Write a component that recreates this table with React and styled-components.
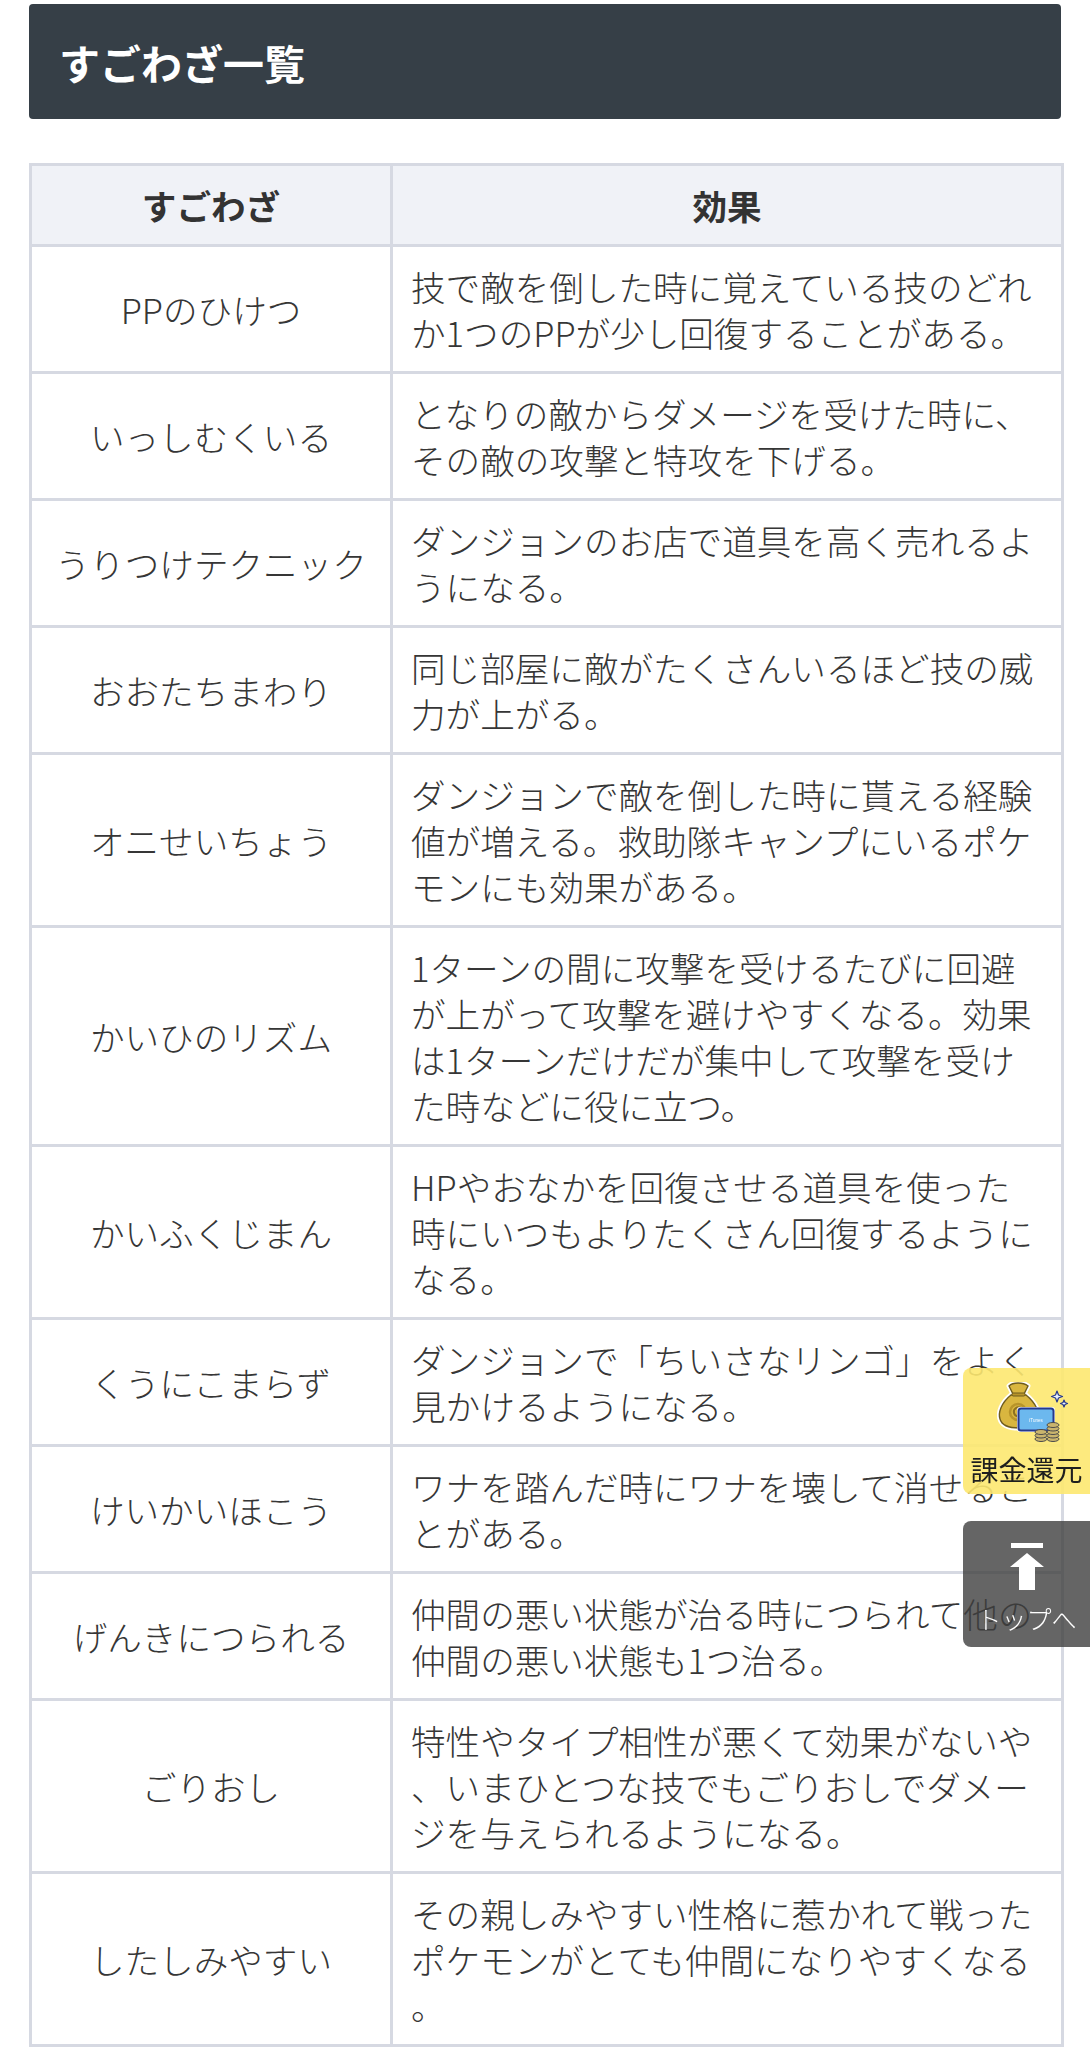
import React from 'react';
import styled, { createGlobalStyle } from 'styled-components';

const GlobalStyle = createGlobalStyle`
  html, body {
    margin: 0;
    padding: 0;
    background: #ffffff;
  }
  body {
    font-family: 'Noto Sans CJK JP', 'Noto Sans', sans-serif;
    color: #333333;
  }
`;

const skills = [
  {
    name: 'PPのひけつ',
    effect: '技で敵を倒した時に覚えている技のどれか1つのPPが少し回復することがある。',
  },
  {
    name: 'いっしむくいる',
    effect: 'となりの敵からダメージを受けた時に、その敵の攻撃と特攻を下げる。',
  },
  {
    name: 'うりつけテクニック',
    effect: 'ダンジョンのお店で道具を高く売れるようになる。',
  },
  {
    name: 'おおたちまわり',
    effect: '同じ部屋に敵がたくさんいるほど技の威力が上がる。',
  },
  {
    name: 'オニせいちょう',
    effect:
      'ダンジョンで敵を倒した時に貰える経験値が増える。救助隊キャンプにいるポケモンにも効果がある。',
  },
  {
    name: 'かいひのリズム',
    effect:
      '1ターンの間に攻撃を受けるたびに回避が上がって攻撃を避けやすくなる。効果は1ターンだけだが集中して攻撃を受けた時などに役に立つ。',
  },
  {
    name: 'かいふくじまん',
    effect: 'HPやおなかを回復させる道具を使った時にいつもよりたくさん回復するようになる。',
  },
  {
    name: 'くうにこまらず',
    effect: 'ダンジョンで「ちいさなリンゴ」をよく見かけるようになる。',
  },
  {
    name: 'けいかいほこう',
    effect: 'ワナを踏んだ時にワナを壊して消せることがある。',
  },
  {
    name: 'げんきにつられる',
    effect: '仲間の悪い状態が治る時につられて他の仲間の悪い状態も1つ治る。',
  },
  {
    name: 'ごりおし',
    effect:
      '特性やタイプ相性が悪くて効果がないや、いまひとつな技でもごりおしでダメージを与えられるようになる。',
  },
  {
    name: 'したしみやすい',
    effect: 'その親しみやすい性格に惹かれて戦ったポケモンがとても仲間になりやすくなる。',
  },
];

const Page = styled.main`
  padding: 4px 29px 0;
`;

const SectionHeader = styled.div`
  display: flex;
  align-items: center;
  height: 115px;
  padding: 0 30px;
  background: #363f47;
  border-radius: 4px;
  box-sizing: border-box;
`;

const SectionTitle = styled.h2`
  margin: 0;
  color: #ffffff;
  font-size: 41px;
  font-weight: 700;
  letter-spacing: 0;
`;

const Table = styled.table`
  width: 100%;
  margin-top: 44px;
  border-collapse: collapse;
  table-layout: fixed;
`;

const Col = styled.col`
  width: ${(p) => p.$w}px;
`;

const HeadCell = styled.th`
  border: 3px solid #d6d9e2;
  background: #f0f2f7;
  padding: 16px 18px;
  font-size: 34.6px;
  line-height: 46px;
  font-weight: 700;
  color: #333333;
  text-align: center;
`;

const NameCell = styled.td`
  border: 3px solid #d6d9e2;
  padding: 16px 10px;
  font-size: 34.6px;
  line-height: 46px;
  font-weight: 300;
  color: #363636;
  text-align: center;
  vertical-align: middle;
  white-space: nowrap;
`;

const EffectCell = styled.td`
  border: 3px solid #d6d9e2;
  padding: 16px 24px 16px 18px;
  font-size: 34.6px;
  line-height: 46px;
  font-weight: 300;
  color: #363636;
  text-align: left;
  vertical-align: middle;
  line-break: anywhere;
`;

const FloatStack = styled.div`
  position: fixed;
  top: 1368px;
  right: 0;
  display: flex;
  flex-direction: column;
  gap: 27px;
  z-index: 10;
`;

const FloatButton = styled.a`
  display: flex;
  flex-direction: column;
  align-items: center;
  width: 127px;
  height: 126px;
  box-sizing: border-box;
  border-radius: 8px 0 0 8px;
  text-decoration: none;
  background: ${(p) => (p.$dark ? 'rgba(62, 62, 62, 0.8)' : 'rgba(253, 232, 112, 0.9)')};
  color: ${(p) => (p.$dark ? '#ffffff' : '#1e1e1e')};
  padding-top: ${(p) => (p.$dark ? '22px' : '14px')};
`;

const FloatLabel = styled.span`
  font-family: 'Noto Sans CJK JP', sans-serif;
  font-size: ${(p) => (p.$small ? '25px' : '28px')};
  line-height: 1.15;
  font-weight: ${(p) => (p.$small ? 300 : 400)};
  margin-top: ${(p) => (p.$small ? '14px' : '9px')};
  white-space: nowrap;
`;

const IconWrap = styled.span`
  display: block;
  margin-left: ${(p) => p.$shift || 0}px;
  line-height: 0;
`;

const MoneyIcon = () => (
  <svg width="72" height="62" viewBox="0 0 72 62">
    {/* bag */}
    <g stroke="#ffffff" strokeWidth="5" strokeLinejoin="round" fill="#ffffff">
      <path d="M14 13 C4 21 1 31 3 37 C5 44 13 46 22 46 C31 46 39 44 41 37 C43 31 39 21 29 13 Z" />
      <path d="M12 4 C16 0 26 0 31 4 L27 12 L16 12 Z" />
    </g>
    <path
      d="M14 13 C4 21 1 31 3 37 C5 44 13 46 22 46 C31 46 39 44 41 37 C43 31 39 21 29 13 Z"
      fill="#d9b63f"
      stroke="#6e5c1e"
      strokeWidth="1.4"
    />
    <path d="M12 4 C16 0 26 0 31 4 L27 12 L16 12 Z" fill="#d9b63f" stroke="#6e5c1e" strokeWidth="1.4" />
    <rect x="15" y="11" width="13" height="3" rx="1.2" fill="#b8942a" stroke="#6e5c1e" strokeWidth="1" />
    <circle cx="21" cy="30" r="8" fill="none" stroke="#b8942a" strokeWidth="2.5" />
    <path d="M24 26 C20 24 16 27 17 31 C18 35 23 35 25 33" fill="none" stroke="#8d7020" strokeWidth="2" />
    {/* card */}
    <rect x="20" y="25" width="38" height="25" rx="3" fill="#ffffff" />
    <rect x="21.5" y="26.5" width="35" height="22" rx="2.5" fill="#6cb8ee" stroke="#26388c" strokeWidth="2" />
    <text x="39" y="40" fontSize="4.5" fill="#ffffff" textAnchor="middle" fontFamily="Liberation Sans, sans-serif">
      iTunes
    </text>
    {/* coins */}
    <g stroke="#4b4b4b" strokeWidth="1" fill="#c9b46d">
      <ellipse cx="44" cy="57" rx="6" ry="2.5" />
      <ellipse cx="44" cy="53.5" rx="6" ry="2.5" />
      <ellipse cx="44" cy="50" rx="6" ry="2.5" />
      <ellipse cx="56" cy="57" rx="6" ry="2.5" />
      <ellipse cx="56" cy="53.5" rx="6" ry="2.5" />
      <ellipse cx="56" cy="50" rx="6" ry="2.5" />
      <ellipse cx="56" cy="46.5" rx="6" ry="2.5" />
      <ellipse cx="56" cy="43" rx="6" ry="2.5" />
    </g>
    {/* sparkles */}
    <g fill="#e8f2ff" stroke="#26388c" strokeWidth="1.2" strokeLinejoin="round">
      <path d="M60 9 L61.5 13 L65.5 14.5 L61.5 16 L60 20 L58.5 16 L54.5 14.5 L58.5 13 Z" />
      <path d="M67 18 L68 20.5 L70.5 21.5 L68 22.5 L67 25 L66 22.5 L63.5 21.5 L66 20.5 Z" />
    </g>
  </svg>
);

const TopArrowIcon = () => (
  <svg width="34" height="47" viewBox="0 0 34 47" fill="#ffffff">
    <rect x="1" y="0" width="32" height="5" />
    <path d="M17 10 L34 24 L25 24 L25 47 L9 47 L9 24 L0 24 Z" />
  </svg>
);

const App = () => {
  return (
    <>
      <GlobalStyle />
      <Page>
        <SectionHeader>
          <SectionTitle>すごわざ一覧</SectionTitle>
        </SectionHeader>
        <Table>
          <colgroup>
            <Col $w={361} />
            <Col $w={671} />
          </colgroup>
          <thead>
            <tr>
              <HeadCell>すごわざ</HeadCell>
              <HeadCell>効果</HeadCell>
            </tr>
          </thead>
          <tbody>
            {skills.map((skill) => (
              <tr key={skill.name}>
                <NameCell>{skill.name}</NameCell>
                <EffectCell>{skill.effect}</EffectCell>
              </tr>
            ))}
          </tbody>
        </Table>
      </Page>
      <FloatStack>
        <FloatButton href="#charge">
          <IconWrap $shift={12}>
            <MoneyIcon />
          </IconWrap>
          <FloatLabel>課金還元</FloatLabel>
        </FloatButton>
        <FloatButton href="#top" $dark>
          <IconWrap>
            <TopArrowIcon />
          </IconWrap>
          <FloatLabel $small>トップへ</FloatLabel>
        </FloatButton>
      </FloatStack>
    </>
  );
};

export default App;
